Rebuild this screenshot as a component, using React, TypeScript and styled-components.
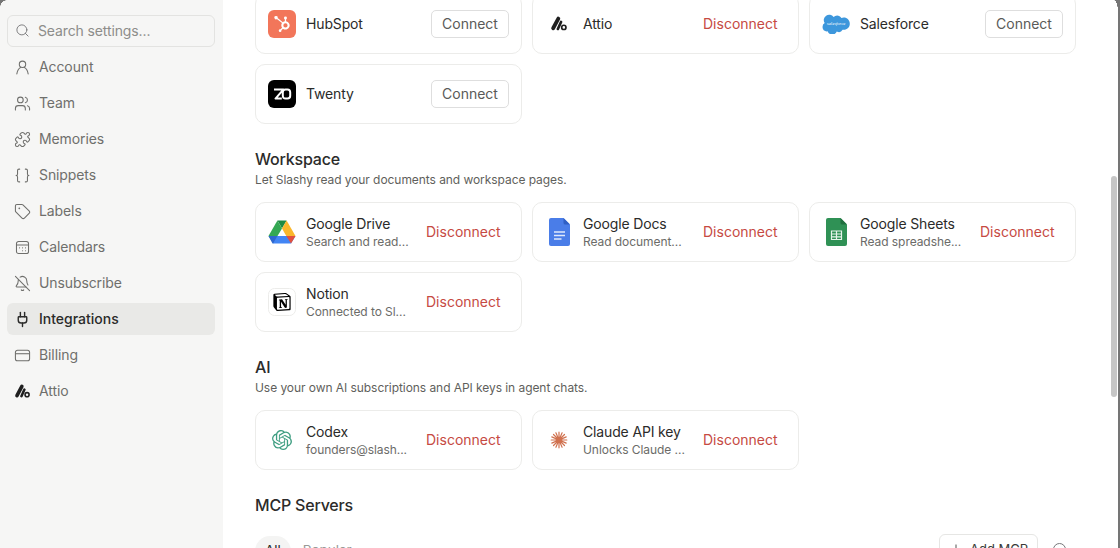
import { createGlobalStyle } from 'styled-components';
import styled from 'styled-components';
import { Search, Users, Puzzle, Braces, Tag, BellOff, Plug, Plus } from 'lucide-react';
import { SiHubspot, SiNotion, SiOpenai } from 'react-icons/si';
import type { ReactNode } from 'react';

const GlobalStyle = createGlobalStyle`
  html, body {
    margin: 0;
    padding: 0;
    height: 100%;
    overflow: hidden;
    background: #fff;
  }
  #root {
    height: 100%;
  }
  * {
    box-sizing: border-box;
  }
`

const Window = styled.div`
  display: flex;
  width: 1120px;
  height: 548px;
  overflow: hidden;
  position: relative;
  font-family: Inter, "Liberation Sans", sans-serif;
  background: #fff;
`

const Corner = styled.div<{ $right?: boolean }>`
  position: absolute;
  top: 0;
  ${p => (p.$right ? 'right: 0;' : 'left: 0;')}
  width: ${p => (p.$right ? '6px' : '7px')};
  height: ${p => (p.$right ? '12px' : '7px')};
  background: ${p => (p.$right
    ? 'radial-gradient(ellipse 4px 12px at 0 100%, transparent 96%, #757575 100%)'
    : 'radial-gradient(circle at 100% 100%, transparent 6.5px, #757575 7px)')};
`

const RightEdge = styled.div`
  position: absolute;
  top: 10px;
  right: 0;
  bottom: 0;
  width: 2px;
  background: #757575;
`

const Sidebar = styled.aside`
  width: 223px;
  flex-shrink: 0;
  background: #f6f6f5;
  padding: 15px 8px 0 7px;
  display: flex;
  flex-direction: column;
`

const SearchBox = styled.div`
  height: 32px;
  border: 1px solid #e3e3e1;
  border-radius: 6px;
  display: flex;
  align-items: center;
  gap: 8px;
  padding: 0 7px 1px;
  margin-bottom: 4px;
  color: #8d8d8a;
  font-size: 14px;
  letter-spacing: -0.12px;
  svg {
    color: #77777a;
  }
`

const NavItem = styled.div<{ $active?: boolean }>`
  height: 32px;
  margin-bottom: 4px;
  border-radius: 6px;
  display: flex;
  align-items: center;
  gap: 8px;
  padding: 0 7px 2px;
  font-size: 14px;
  letter-spacing: ${p => (p.$active ? '0' : '-0.1px')};
  color: ${p => (p.$active ? '#2b2b2a' : '#6f6f6c')};
  background: ${p => (p.$active ? '#e9e9e7' : 'transparent')};
  font-weight: ${p => (p.$active ? 500 : 400)};
  svg {
    flex-shrink: 0;
    position: relative;
    top: 1px;
  }
`

const Main = styled.main`
  flex: 1;
  min-width: 0;
  padding: 0 28px 0 32px;
  overflow: hidden;
`

const Grid = styled.div`
  display: grid;
  grid-template-columns: repeat(3, 267px);
  gap: 10px;
`

const TopGrid = styled(Grid)`
  margin-top: -6px;
`

const Section = styled.section`
  margin-top: 26px;
`

const Heading = styled.h2`
  margin: 0;
  font-size: 16px;
  line-height: 19px;
  font-weight: 500;
  letter-spacing: -0.2px;
  color: #2b2b2a;
`

const Hint = styled.p`
  margin: 3px 0 15px;
  font-size: 12px;
  line-height: 15px;
  letter-spacing: -0.06px;
  color: #5f5f5c;
`

const Card = styled.div`
  height: 60px;
  border: 1px solid #ececea;
  border-radius: 10px;
  background: #fff;
  display: flex;
  align-items: center;
  padding: 0 12px;
  gap: 10px;
`

const Logo = styled.div`
  width: 28px;
  height: 28px;
  flex-shrink: 0;
  display: flex;
  align-items: center;
  justify-content: center;
`

const CardText = styled.div`
  flex: 1;
  min-width: 0;
  padding-bottom: 1px;
`

const CardName = styled.div`
  font-size: 14px;
  line-height: 17px;
  letter-spacing: -0.15px;
  color: #2b2b2a;
  white-space: nowrap;
`

const CardSub = styled.div`
  font-size: 12px;
  line-height: 15px;
  margin-top: 2px;
  letter-spacing: -0.06px;
  color: #6b6b68;
  white-space: nowrap;
`

const ConnectButton = styled.button`
  height: 28px;
  width: 78px;
  flex-shrink: 0;
  padding: 0 0 1px;
  border: 1px solid #dedede;
  border-radius: 5px;
  background: #fff;
  color: #5a5a58;
  font: inherit;
  font-size: 14px;
`

const DisconnectButton = styled.button`
  width: 74px;
  margin-right: 9px;
  flex-shrink: 0;
  padding: 0 0 2px;
  border: 0;
  background: none;
  color: #c64a43;
  font: inherit;
  font-size: 14px;
  text-align: center;
  white-space: nowrap;
`

const Toolbar = styled.div`
  display: flex;
  align-items: flex-start;
  margin-top: 19px;
  height: 30px;
  font-size: 13px;
  color: #6f6f6c;
`

const FilterPill = styled.div<{ $active?: boolean }>`
  height: 30px;
  margin-top: 2px;
  padding: 0 ${p => (p.$active ? '10px' : '12px')} 3px;
  border-radius: 15px;
  display: flex;
  align-items: center;
  font-size: 13.500px;
  background: ${p => (p.$active ? '#f4f4f3' : 'transparent')};
  color: ${p => (p.$active ? '#2b2b2a' : '#9a9a97')};
`

const AddButton = styled.button`
  margin-left: auto;
  height: 30px;
  width: 99px;
  border: 1px solid #e6e6e4;
  border-radius: 6px;
  background: #fff;
  font: inherit;
  color: #3a3a38;
  display: flex;
  align-items: center;
  justify-content: center;
  gap: 7px;
  padding: 0;
`

const RoundIcon = styled.div`
  margin: 9px 10px 0 15px;
  width: 13px;
  height: 13px;
  border-radius: 50%;
  border: 1.3px solid #77777a;
`

const ScrollTrack = styled.div`
  width: 16px;
  flex-shrink: 0;
  position: relative;
  background: #fff;
`

const ScrollThumb = styled.div`
  position: absolute;
  top: 176px;
  left: 7px;
  width: 6px;
  height: 221px;
  border-radius: 3px;
  background: #c6c6c6;
`

const HubSpotLogo = () => (
  <svg width="28" height="28" viewBox="0 0 28 28">
    <rect width="28" height="28" rx="6" fill="#f2765a" />
    <SiHubspot x="6" y="6" size={16} color="#fff" />
  </svg>
)

const TwentyLogo = () => (
  <svg width="28" height="28" viewBox="0 0 28 28">
    <rect width="28" height="28" rx="6" fill="#000" />
    <path d="M6 9.400h9.500L7.500 18.600h6.300M14.800 12.200c0-1.700 1-2.800 2.700-2.800h2c1.700 0 2.700 1.100 2.700 2.800v3.600c0 1.700-1 2.800-2.700 2.800h-2c-1.700 0-2.700-1.100-2.700-2.800z" fill="none" stroke="#fff" strokeWidth="2" strokeLinejoin="round" />
  </svg>
)

const AttioLogo = ({ size = 16 }: { size?: number }) => (
  <svg width={size} height={size} viewBox="0 0 16 16" fill="none" stroke="#1f1f1f" strokeLinecap="round">
    <path d="M7.400 3.200 2.800 11.800" strokeWidth="3.400" />
    <path d="M9.800 6.200 7 12.400" strokeWidth="2.400" />
    <circle cx="12.300" cy="11" r="1.900" strokeWidth="1.500" />
  </svg>
)

const SalesforceLogo = () => (
  <svg width="28" height="20" viewBox="0 0 28 20">
    <path d="M11.600 3.100A4.900 4.900 0 0 1 15.100 1.600c1.800 0 3.400 1 4.300 2.500a5.900 5.900 0 0 1 2.400-.5c3.300 0 6 2.700 6 6.100s-2.700 6.100-6 6.100h-1.200a4.400 4.400 0 0 1-5.800 1.800 5 5 0 0 1-9.200-.3 4.100 4.100 0 0 1-.9.1C2.400 17.400.5 15.500.5 13a4.500 4.500 0 0 1 2.200-3.900 5.200 5.200 0 0 1 8.900-6z" fill="#3d97dc" />
    <text x="14" y="11.400" fontSize="4.600" textAnchor="middle" fill="#fff" fontFamily="Liberation Serif, serif" fontStyle="italic">salesforce</text>
  </svg>
)

const DriveLogo = () => (
  <svg width="28" height="25" viewBox="0 0 28 25">
    <path d="M9.400 0.500h9.200L14 8.400 11.500 4z" fill="#1f8a43" />
    <path d="M9.400 0.500 14 8.400 5.200 23.200 0.500 16z" fill="#34a853" />
    <path d="M18.600 0.500 27.500 16h-9.200L14 8.400z" fill="#fbb72c" />
    <path d="M5 16h22.500L23 23.500H5z" fill="#4285f4" />
    <path d="M0.500 16H9.400L5 23.500h-.5z" fill="#2f67cf" />
    <path d="M18.300 16h9.200l-4.500 7.500z" fill="#e2503f" />
  </svg>
)

const DocSheet = ({ fill, fold, children }: { fill: string; fold: string; children: ReactNode }) => (
  <svg width="21" height="28" viewBox="0 0 21 28">
    <path d="M2 0h12.500L21 6.500V26a2 2 0 0 1-2 2H2a2 2 0 0 1-2-2V2a2 2 0 0 1 2-2z" fill={fill} />
    <path d="M14.500 0 21 6.500h-5a1.500 1.500 0 0 1-1.500-1.500z" fill={fold} />
    {children}
  </svg>
)

const DocsLogo = () => (
  <DocSheet fill="#4a7de8" fold="#2f5fc4">
    <path d="M5 14h11M5 17.500h11M5 21h7.500" stroke="#dfe9fb" strokeWidth="1.400" />
  </DocSheet>
)

const SheetsLogo = () => (
  <DocSheet fill="#2f9155" fold="#1f6f3e">
    <path d="M5.500 13h10v8.500h-10zM5.500 16h10M5.500 18.800h10M10.500 13v8.500" fill="none" stroke="#e5f3ea" strokeWidth="1.200" />
  </DocSheet>
)

const NotionLogo = () => (
  <svg width="28" height="28" viewBox="0 0 28 28">
    <rect x=".5" y=".5" width="27" height="27" rx="6" fill="#fff" stroke="#ececea" />
    <SiNotion x="5" y="5" size={18} color="#000" />
  </svg>
)

const ClaudeLogo = () => (
  <svg width="18" height="18" viewBox="0 0 18 18" stroke="#d0714f" strokeWidth="1.200" strokeLinecap="round">
    <path d="M9 1.200v15.600M1.200 9h15.600M3.500 3.500l11 11M14.500 3.500l-11 11M5.900 1.800l6.200 14.400M12.100 1.800 5.900 16.200M1.800 5.900l14.400 6.200M16.200 5.900 1.800 12.100" />
  </svg>
)

const UserIcon = () => (
  <svg width="17" height="17" viewBox="0 0 24 24" fill="none" stroke="currentColor" strokeWidth="1.500" strokeLinecap="round">
    <circle cx="12" cy="7.500" r="4.500" />
    <path d="M4 21c.5-5 3.500-8.500 5.500-9M20 21c-.5-5-3.500-8.500-5.500-9" />
  </svg>
)

const CalendarIcon = () => (
  <svg width="17" height="17" viewBox="0 0 24 24" fill="none" stroke="currentColor" strokeWidth="1.500" strokeLinecap="round">
    <rect x="3.500" y="3.500" width="17" height="17" rx="3" />
    <path d="M3.500 8.500h17M7.800 12.500h.1M12 12.500h.1M16.200 12.500h.1M12 16.500h.1M16.200 16.500h.1" />
  </svg>
)

const CardIcon = () => (
  <svg width="17" height="17" viewBox="0 0 24 24" fill="none" stroke="currentColor" strokeWidth="1.500">
    <rect x="2" y="4.500" width="20" height="15" rx="3" />
    <path d="M2 9.500h20" />
  </svg>
)

const navItems = [
  { label: 'Account', icon: <UserIcon /> },
  { label: 'Team', icon: <Users size={17} strokeWidth={1.5} /> },
  { label: 'Memories', icon: <Puzzle size={17} strokeWidth={1.5} /> },
  { label: 'Snippets', icon: <Braces size={17} strokeWidth={1.5} /> },
  { label: 'Labels', icon: <Tag size={17} strokeWidth={1.5} /> },
  { label: 'Calendars', icon: <CalendarIcon /> },
  { label: 'Unsubscribe', icon: <BellOff size={17} strokeWidth={1.5} /> },
  { label: 'Integrations', icon: <Plug size={17} strokeWidth={2} />, active: true },
  { label: 'Billing', icon: <CardIcon /> },
  { label: 'Attio', icon: <AttioLogo size={17} /> },
]

type Integration = {
  name: string;
  sub?: string;
  logo: ReactNode;
  connected?: boolean;
}

const crm: Integration[] = [
  { name: 'HubSpot', logo: <HubSpotLogo /> },
  { name: 'Attio', logo: <AttioLogo size={18} />, connected: true },
  { name: 'Salesforce', logo: <SalesforceLogo /> },
  { name: 'Twenty', logo: <TwentyLogo /> },
]

const workspace: Integration[] = [
  { name: 'Google Drive', sub: 'Search and read...', logo: <DriveLogo />, connected: true },
  { name: 'Google Docs', sub: 'Read document...', logo: <DocsLogo />, connected: true },
  { name: 'Google Sheets', sub: 'Read spreadshe...', logo: <SheetsLogo />, connected: true },
  { name: 'Notion', sub: 'Connected to Sl...', logo: <NotionLogo />, connected: true },
]

const ai: Integration[] = [
  { name: 'Codex', sub: 'founders@slash...', logo: <SiOpenai size={20} color="#3f9e82" />, connected: true },
  { name: 'Claude API key', sub: 'Unlocks Claude ...', logo: <ClaudeLogo />, connected: true },
]

const IntegrationCard = ({ item }: { item: Integration }) => (
  <Card>
    <Logo>{item.logo}</Logo>
    <CardText>
      <CardName>{item.name}</CardName>
      {item.sub && <CardSub>{item.sub}</CardSub>}
    </CardText>
    {item.connected ? <DisconnectButton>Disconnect</DisconnectButton> : <ConnectButton>Connect</ConnectButton>}
  </Card>
)

const App = () => {
  return (
    <Window>
      <GlobalStyle />
      <Sidebar>
        <SearchBox>
          <Search size={15} strokeWidth={1.5} />
          <span>Search settings...</span>
        </SearchBox>
        {navItems.map(item => (
          <NavItem key={item.label} $active={item.active}>
            {item.icon}
            {item.label}
          </NavItem>
        ))}
      </Sidebar>
      <Main>
        <TopGrid>
          {crm.map(item => <IntegrationCard key={item.name} item={item} />)}
        </TopGrid>
        <Section>
          <Heading>Workspace</Heading>
          <Hint>Let Slashy read your documents and workspace pages.</Hint>
          <Grid>
            {workspace.map(item => <IntegrationCard key={item.name} item={item} />)}
          </Grid>
        </Section>
        <Section>
          <Heading>AI</Heading>
          <Hint>Use your own AI subscriptions and API keys in agent chats.</Hint>
          <Grid>
            {ai.map(item => <IntegrationCard key={item.name} item={item} />)}
          </Grid>
        </Section>
        <Section>
          <Heading>MCP Servers</Heading>
          <Toolbar>
            <FilterPill $active>All</FilterPill>
            <FilterPill>Popular</FilterPill>
            <AddButton><Plus size={14} strokeWidth={1.5} />Add MCP</AddButton>
            <RoundIcon />
          </Toolbar>
        </Section>
      </Main>
      <ScrollTrack>
        <ScrollThumb />
      </ScrollTrack>
      <RightEdge />
      <Corner />
      <Corner $right />
    </Window>
  );
};

export default App;
